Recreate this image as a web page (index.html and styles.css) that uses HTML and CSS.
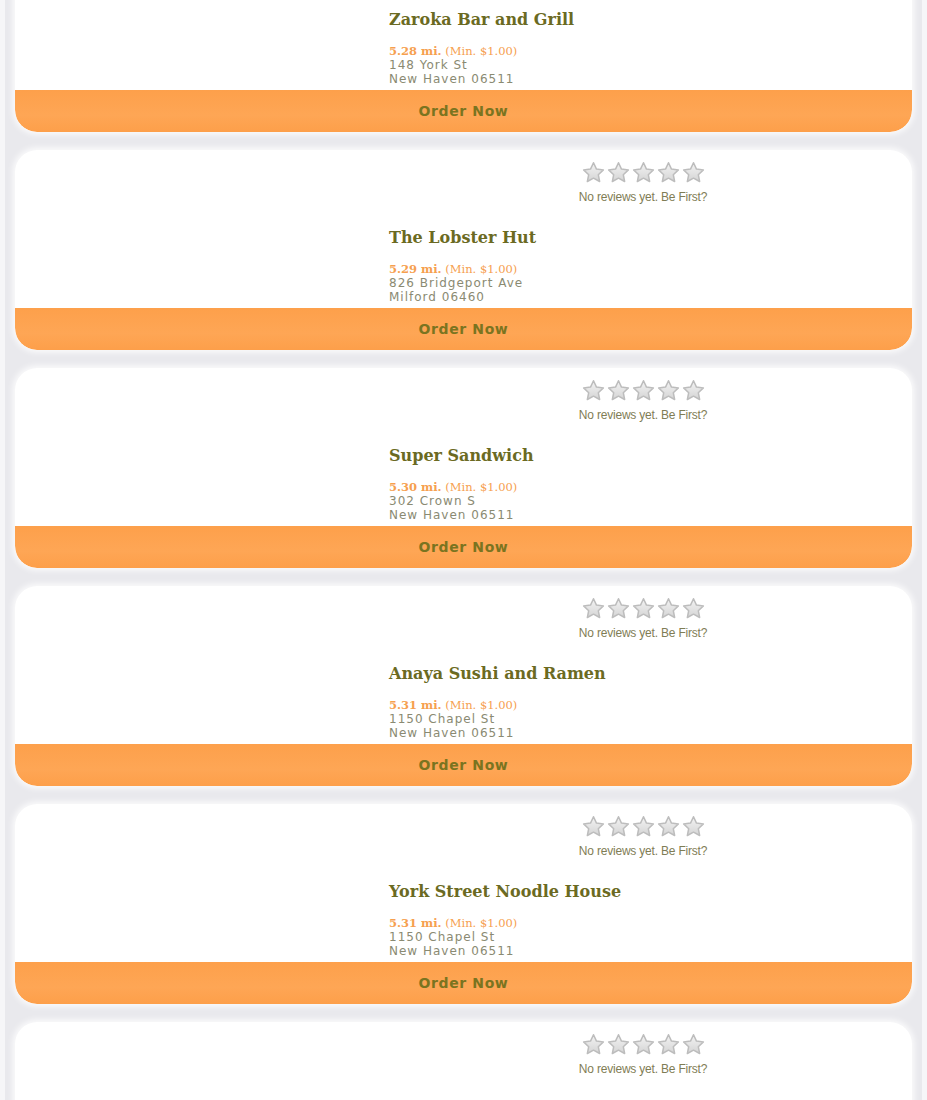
FILE: index.html
```html
<!DOCTYPE html>
<html lang="en">
<head>
	<meta charset="UTF-8">
	<title>Restaurants</title>
	<link rel="stylesheet" href="styles.css">
</head>
<body>
	<svg width="0" height="0" class="defs">
		<defs>
			<linearGradient id="sg" x1="0" y1="0" x2="0" y2="1">
				<stop offset="0" stop-color="#f4f4f4"/>
				<stop offset="1" stop-color="#d4d4d4"/>
			</linearGradient>
			<symbol id="star" viewBox="0 0 24 24">
				<path d="M12 1.8l3.1 6.6 7.2.9-5.3 5 1.4 7.1L12 17.9l-6.4 3.5 1.4-7.1-5.3-5 7.2-.9z" fill="url(#sg)" stroke="#bdbdbd" stroke-width="1.6" stroke-linejoin="round"/>
			</symbol>
		</defs>
	</svg>
	<div class="page">
		<div class="list">

			<div class="card first">
				<div class="card-top">
					<div class="pic"></div>
					<div class="info">
						<div class="rating"></div>
						<h2 class="name">Zaroka Bar and Grill</h2>
						<p class="dist"><b>5.28 mi.</b> (Min. $1.00)</p>
						<p class="addr">148 York St<br>New Haven 06511</p>
					</div>
				</div>
				<a class="order">Order Now</a>
			</div>

			<div class="card">
				<div class="card-top">
					<div class="pic"></div>
					<div class="info">
						<div class="rating">
							<div class="stars">
								<svg><use href="#star"/></svg><svg><use href="#star"/></svg><svg><use href="#star"/></svg><svg><use href="#star"/></svg><svg><use href="#star"/></svg>
							</div>
							<p class="noreviews">No reviews yet. Be First?</p>
						</div>
						<h2 class="name">The Lobster Hut</h2>
						<p class="dist"><b>5.29 mi.</b> (Min. $1.00)</p>
						<p class="addr">826 Bridgeport Ave<br>Milford 06460</p>
					</div>
				</div>
				<a class="order">Order Now</a>
			</div>

			<div class="card">
				<div class="card-top">
					<div class="pic"></div>
					<div class="info">
						<div class="rating">
							<div class="stars">
								<svg><use href="#star"/></svg><svg><use href="#star"/></svg><svg><use href="#star"/></svg><svg><use href="#star"/></svg><svg><use href="#star"/></svg>
							</div>
							<p class="noreviews">No reviews yet. Be First?</p>
						</div>
						<h2 class="name">Super Sandwich</h2>
						<p class="dist"><b>5.30 mi.</b> (Min. $1.00)</p>
						<p class="addr">302 Crown S<br>New Haven 06511</p>
					</div>
				</div>
				<a class="order">Order Now</a>
			</div>

			<div class="card">
				<div class="card-top">
					<div class="pic"></div>
					<div class="info">
						<div class="rating">
							<div class="stars">
								<svg><use href="#star"/></svg><svg><use href="#star"/></svg><svg><use href="#star"/></svg><svg><use href="#star"/></svg><svg><use href="#star"/></svg>
							</div>
							<p class="noreviews">No reviews yet. Be First?</p>
						</div>
						<h2 class="name">Anaya Sushi and Ramen</h2>
						<p class="dist"><b>5.31 mi.</b> (Min. $1.00)</p>
						<p class="addr">1150 Chapel St<br>New Haven 06511</p>
					</div>
				</div>
				<a class="order">Order Now</a>
			</div>

			<div class="card">
				<div class="card-top">
					<div class="pic"></div>
					<div class="info">
						<div class="rating">
							<div class="stars">
								<svg><use href="#star"/></svg><svg><use href="#star"/></svg><svg><use href="#star"/></svg><svg><use href="#star"/></svg><svg><use href="#star"/></svg>
							</div>
							<p class="noreviews">No reviews yet. Be First?</p>
						</div>
						<h2 class="name">York Street Noodle House</h2>
						<p class="dist"><b>5.31 mi.</b> (Min. $1.00)</p>
						<p class="addr">1150 Chapel St<br>New Haven 06511</p>
					</div>
				</div>
				<a class="order">Order Now</a>
			</div>

			<div class="card">
				<div class="card-top">
					<div class="pic"></div>
					<div class="info">
						<div class="rating">
							<div class="stars">
								<svg><use href="#star"/></svg><svg><use href="#star"/></svg><svg><use href="#star"/></svg><svg><use href="#star"/></svg><svg><use href="#star"/></svg>
							</div>
							<p class="noreviews">No reviews yet. Be First?</p>
						</div>
					</div>
				</div>
			</div>

		</div>
	</div>
</body>
</html>
```

FILE: styles.css
```css
*{
	margin:0;
	padding:0;
	box-sizing:border-box;
}
html,body{
	width:100%;
	height:100%;
	overflow:hidden;
}
body{
	background:#f6f6f8;
	font-family:"DejaVu Sans", sans-serif;
}
.defs{
	position:absolute;
}
.page{
	margin:0 5px;
	height:100%;
	background:#e9e9ed;
	padding:0 10px;
}
.list{
	display:flex;
	flex-direction:column;
	gap:18px;
}
.card{
	background:#fff;
	border-radius:22px;
	box-shadow:0 0 6px 2px rgba(255,255,255,.9), 0 0 1px #d9d9de;
	overflow:hidden;
}
.card.first{
	margin-top:-68px;
}
.card-top{
	display:grid;
	grid-template-columns:374px 1fr;
	height:158px;
	padding-right:15px;
}
.info{
	padding-top:11px;
}
.rating{
	display:flex;
	flex-direction:column;
	align-items:center;
	height:43px;
}
.stars{
	display:flex;
	gap:2px;
	height:22px;
}
.stars svg{
	width:23px;
	height:23px;
}
.noreviews{
	font-family:"Liberation Sans", sans-serif;
	font-size:12px;
	line-height:14px;
	margin-top:7px;
	color:#7f7d55;
	letter-spacing:-.2px;
}
.name{
	font-family:"DejaVu Serif", serif;
	font-size:16px;
	font-weight:bold;
	line-height:24px;
	margin-top:22px;
	color:#6b6a22;
}
.dist{
	font-family:"DejaVu Serif", serif;
	font-size:11.5px;
	line-height:14px;
	margin-top:12px;
	color:#f6a04f;
}
.dist b{
	font-weight:bold;
}
.addr{
	font-size:12px;
	line-height:14px;
	color:#8a8a72;
	letter-spacing:1px;
}
.order{
	display:block;
	height:42px;
	line-height:42px;
	text-align:center;
	background:linear-gradient(#fda04b,#fea655 60%,#fd9f4a);
	color:#7a7420;
	font-size:14px;
	font-weight:bold;
	letter-spacing:.6px;
	border-radius:0 0 22px 22px;
}
```
